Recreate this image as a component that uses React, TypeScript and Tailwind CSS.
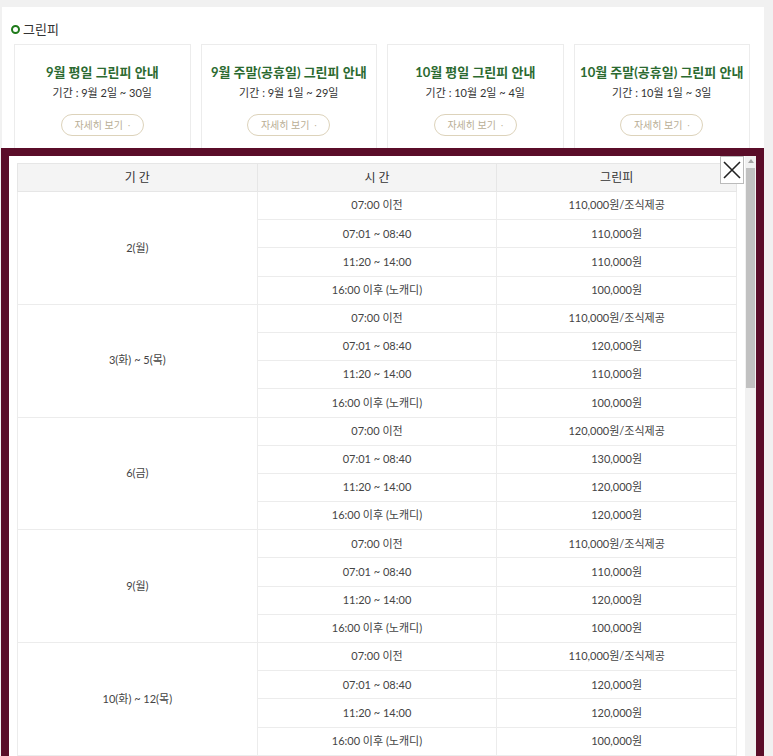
import React from "react";

const font = { fontFamily: 'Lato, "Noto Sans CJK KR", "Noto Sans", sans-serif' };

const cards = [
  { title: "9월 평일 그린피 안내", period: "기간 : 9월 2일 ~ 30일" },
  { title: "9월 주말(공휴일) 그린피 안내", period: "기간 : 9월 1일 ~ 29일" },
  { title: "10월 평일 그린피 안내", period: "기간 : 10월 2일 ~ 4일" },
  { title: "10월 주말(공휴일) 그린피 안내", period: "기간 : 10월 1일 ~ 3일" },
];

const times = ["07:00 이전", "07:01 ~ 08:40", "11:20 ~ 14:00", "16:00 이후 (노캐디)"];

const groups = [
  { label: "2(월)", fees: ["110,000원/조식제공", "110,000원", "110,000원", "100,000원"] },
  { label: "3(화) ~ 5(목)", fees: ["110,000원/조식제공", "120,000원", "110,000원", "100,000원"] },
  { label: "6(금)", fees: ["120,000원/조식제공", "130,000원", "120,000원", "120,000원"] },
  { label: "9(월)", fees: ["110,000원/조식제공", "110,000원", "120,000원", "100,000원"] },
  { label: "10(화) ~ 12(목)", fees: ["110,000원/조식제공", "120,000원", "120,000원", "100,000원"] },
];

export default function App() {
  return (
    <div className="relative h-[756px] w-[773px] overflow-hidden bg-[#f1f1f1]" style={font}>
      <div className="ml-[2px] mt-[7px] h-[800px] w-[762px] bg-white pt-[13px]">
        <div className="flex h-[18px] items-center pl-[9px]">
          <span className="block h-[9px] w-[9px] rounded-full border-[2.5px] border-[#1f7a1a]" />
          <span className="ml-[3px] text-[13px] leading-[18px] text-[#333]">그린피</span>
        </div>
        <div className="mt-[6px] flex gap-[10px] pl-[12px]">
          {cards.map((c) => (
            <div key={c.title} className="h-[130px] w-[176.5px] border border-[#ececec] bg-white pt-[19px] text-center">
              <div className="text-[13px] font-bold leading-[16px] text-[#2b6a30]">{c.title}</div>
              <div className="mt-[5px] text-[11px] leading-[16px] text-[#333]">{c.period}</div>
              <div className="mt-[13px] flex justify-center">
                <div className="flex h-[22px] w-[83px] items-center justify-center rounded-full border border-[#ddd3bb] text-[10px] text-[#b9ae95]">
                  자세히 보기<span className="ml-[5px] text-[8px]">·</span>
                </div>
              </div>
            </div>
          ))}
        </div>
      </div>

      <div className="absolute left-[1px] top-[148px] h-[640px] w-[763px] border-[8px] border-b-0 border-[#5a0d29] bg-white">
        <div className="pl-[8px] pt-[7px]">
          <table className="w-[720px] table-fixed border-collapse text-center">
            <thead>
              <tr className="h-[28px] bg-[#f4f4f4]">
                <th className="border border-[#e6e6e6] text-[12px] font-normal text-[#333]">기 간</th>
                <th className="border border-[#e6e6e6] text-[12px] font-normal text-[#333]">시 간</th>
                <th className="border border-[#e6e6e6] text-[12px] font-normal text-[#333]">그린피</th>
              </tr>
            </thead>
            <tbody>
              {groups.map((g) =>
                times.map((t, i) => (
                  <tr key={g.label + t} className="h-[28.2px]">
                    {i === 0 && (
                      <td rowSpan={4} className="border border-[#ececec] text-[11px] text-[#444]">
                        {g.label}
                      </td>
                    )}
                    <td className="border border-[#ececec] p-0 text-[11px] text-[#444]">{t}</td>
                    <td className="border border-[#ececec] p-0 text-[11px] text-[#444]">{g.fees[i]}</td>
                  </tr>
                ))
              )}
            </tbody>
          </table>
        </div>

        <div className="absolute left-[711px] top-0 flex h-[28px] w-[24px] items-center justify-center border border-[#bbb] bg-white">
          <svg width="18" height="18" viewBox="0 0 18 18">
            <path d="M1 1 L17 17 M17 1 L1 17" stroke="#222" strokeWidth="1.6" fill="none" />
          </svg>
        </div>

        <div className="absolute left-[736px] top-0 h-full w-[11px] bg-[#f1f1f1]">
          <div className="flex h-[10px] items-center justify-center">
            <svg width="6" height="4" viewBox="0 0 6 4">
              <path d="M0 4 L3 0 L6 4 Z" fill="#a3a3a3" />
            </svg>
          </div>
          <div className="ml-[1px] mt-[2px] h-[220px] w-[9px] bg-[#c1c1c1]" />
        </div>
      </div>
    </div>
  );
}
